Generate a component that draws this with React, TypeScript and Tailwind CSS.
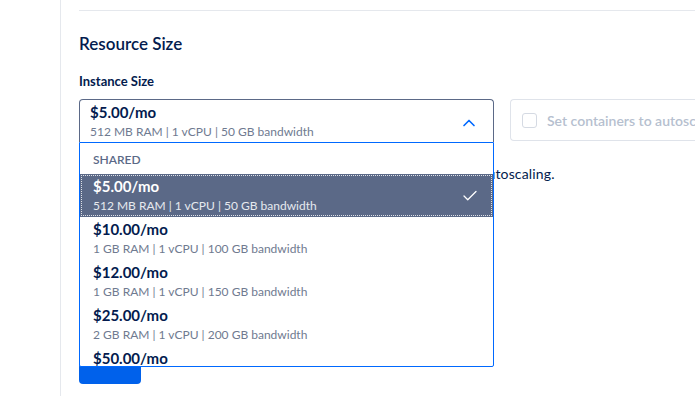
import { ChevronUp, Check } from 'lucide-react';

const plans = [
  { price: '$5.00/mo', spec: '512 MB RAM | 1 vCPU | 50 GB bandwidth', selected: true },
  { price: '$10.00/mo', spec: '1 GB RAM | 1 vCPU | 100 GB bandwidth' },
  { price: '$12.00/mo', spec: '1 GB RAM | 1 vCPU | 150 GB bandwidth' },
  { price: '$25.00/mo', spec: '2 GB RAM | 1 vCPU | 200 GB bandwidth' },
  { price: '$50.00/mo', spec: '2 GB RAM | 2 vCPU | 300 GB bandwidth' },
];

const App = () => {
  return (
    <div className="flex h-[396px] w-[695px] overflow-hidden bg-white font-['Lato',sans-serif] text-[#031b4e]">
      <div className="w-[61px] shrink-0 border-r border-[#e5e8ed]" />
      <div className="min-w-0 flex-1 pl-[18px] pt-[10px]">
        <div className="border-t border-[#e5e8ed]" />
        <h2 className="mt-[22px] text-[17px] font-semibold leading-[22px]">Resource Size</h2>
        <label className="mt-[18px] block text-[13px] font-bold leading-[16px]">Instance Size</label>

        <div className="mt-[10px] flex gap-4">
          {/* select + open menu */}
          <div className="relative z-10 w-[415px] shrink-0">
            <button className="flex h-[43px] w-full items-center justify-between rounded-t-[4px] border border-b-0 border-[#5b6987] bg-white pl-[10px] pr-[14px] text-left">
              <div>
                <div className="text-[15px] font-bold leading-[18px]">$5.00/mo</div>
                <div className="mt-[3px] text-[12px] leading-[15px] text-[#6f7a90]">
                  512 MB RAM | 1 vCPU | 50 GB bandwidth
                </div>
              </div>
              <ChevronUp className="mt-[4px] h-5 w-5 text-[#0069ff]" strokeWidth={2} />
            </button>

            <div className="absolute left-0 top-[43px] h-[225px] w-full overflow-hidden rounded-b-[2px] border border-[#0069ff] bg-white">
              <div className="px-[13px] pt-[9px] pb-[7px] text-[12px] font-semibold leading-[15px] text-[#5b6987]">SHARED</div>
              {plans.map((p) => (
                <div
                  key={p.price}
                  className={
                    p.selected
                      ? 'flex h-[43px] items-center justify-between bg-[#5b6987] pl-[13px] pr-[14px] text-white outline outline-1 -outline-offset-2 outline-dotted outline-white/80'
                      : 'flex h-[43px] items-center justify-between pl-[13px] pr-[14px]'
                  }
                >
                  <div className="-mt-[2px]">
                    <div className="text-[15px] font-bold leading-[18px]">{p.price}</div>
                    <div className={p.selected ? 'mt-[3px] text-[12px] leading-[15px] text-[#e6e9ef]' : 'mt-[3px] text-[12px] leading-[15px] text-[#6f7a90]'}>
                      {p.spec}
                    </div>
                  </div>
                  {p.selected && <Check className="h-[18px] w-[18px]" strokeWidth={1.75} />}
                </div>
              ))}
            </div>
          </div>

          {/* autoscale checkbox card */}
          <div className="flex h-[42px] flex-1 items-center gap-[10px] rounded-l-[4px] border border-r-0 border-[#dfe3ea] pl-[11px] whitespace-nowrap">
            <span className="h-[15px] w-[15px] shrink-0 rounded-[3px] border border-[#d5dae3] bg-white" />
            <span className="text-[14px] font-semibold text-[#b6bfcf]">Set containers to autoscale</span>
          </div>
        </div>

        <p className="mt-[23px] whitespace-nowrap text-[14px] leading-[18px] tracking-[0.15px]">
          Containers will be scaled based on CPU usage when you enable autoscaling.
        </p>
        <div className="mt-[165px] h-[36px] w-[62px] rounded-[4px] bg-[#0061eb]" />
      </div>
    </div>
  );
};

export default App;
